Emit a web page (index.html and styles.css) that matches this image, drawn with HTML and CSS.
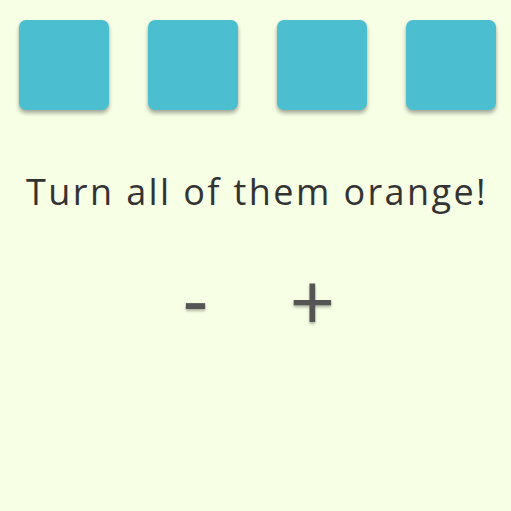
FILE: index.html
```html
<!DOCTYPE html>
<html>
<head>
<meta charset="utf-8">
<link rel="stylesheet" href="styles.css">
</head>
<body>
<div class="tiles">
  <div class="tile"></div>
  <div class="tile"></div>
  <div class="tile"></div>
  <div class="tile"></div>
</div>
<h1 class="goal">Turn all of them orange!</h1>
<div class="controls">
  <span class="btn minus">-</span>
  <span class="btn plus">+</span>
</div>
</body>
</html>
```
FILE: styles.css
```css
html, body {
  margin: 0;
  padding: 0;
  background: #f7ffe5;
  height: 100%;
}
body {
  font-family: "Open Sans", sans-serif;
}
.tiles {
  display: flex;
  gap: 39px;
  padding: 20px 0 0 19px;
}
.tile {
  width: 90px;
  height: 90px;
  border-radius: 7px;
  background: #4bbfd0;
  box-shadow: 0 3px 4px rgba(0, 0, 0, 0.35);
}
.goal {
  margin: 58px 0 0;
  padding-left: 3px;
  text-align: center;
  font-weight: 400;
  font-size: 36px;
  letter-spacing: 2.4px;
  line-height: 48px;
  color: #333333;
}
.controls {
  display: flex;
  justify-content: center;
  gap: 80px;
  margin-top: 44px;
  padding-left: 5px;
  font-family: "Lato", sans-serif;
  font-size: 78px;
  line-height: 78px;
  color: #555555;
}
.btn {
  text-shadow: 0 2px 3px rgba(0, 0, 0, 0.3);
}
```
